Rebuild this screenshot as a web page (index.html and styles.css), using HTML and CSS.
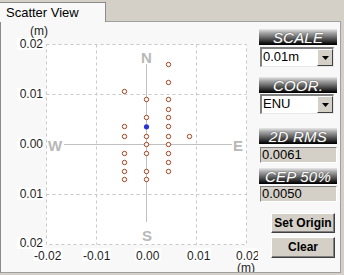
FILE: index.html
```html
<!DOCTYPE html>
<html>
<head>
<meta charset="utf-8">
<link rel="stylesheet" href="styles.css">
</head>
<body>
<div class="tabbar"><div class="tab">Scatter View</div></div>
<div class="panel">
  <svg class="plot" width="257" height="250" viewBox="1 22 257 250" xmlns="http://www.w3.org/2000/svg">
    <rect x="46.5" y="44.5" width="200" height="200" fill="#ffffff" stroke="#c8c8c8" stroke-dasharray="3 3"/>
    <g stroke="#c8c8c8" stroke-dasharray="3 3">
      <line x1="96.5" y1="44.5" x2="96.5" y2="244.5"/>
      <line x1="196.5" y1="44.5" x2="196.5" y2="244.5"/>
      <line x1="46.5" y1="94.5" x2="246.5" y2="94.5"/>
      <line x1="46.5" y1="194.5" x2="246.5" y2="194.5"/>
    </g>
    <g stroke="#c0c0c0">
      <line x1="146.5" y1="64" x2="146.5" y2="222"/>
      <line x1="64" y1="144.5" x2="232" y2="144.5"/>
    </g>
    <g class="dir">
      <text x="146.5" y="63" text-anchor="middle">N</text>
      <text x="147" y="241" text-anchor="middle">S</text>
      <text x="48" y="151">W</text>
      <text x="233" y="151">E</text>
    </g>
    <g fill="#ffffff">
      <rect x="17" y="38" width="27" height="12"/>
      <rect x="17" y="88" width="27" height="12"/>
      <rect x="17" y="138" width="27" height="12"/>
      <rect x="17" y="188" width="27" height="12"/>
      <rect x="17" y="237" width="27" height="12"/>
      <rect x="33" y="248" width="30" height="13"/>
      <rect x="82" y="248" width="29" height="13"/>
      <rect x="135" y="248" width="26" height="13"/>
      <rect x="186" y="248" width="25" height="13"/>
      <rect x="235" y="248" width="25" height="13"/>
    </g>
    <g class="lbl">
      <text x="30" y="35">(m)</text>
      <text x="43" y="48" text-anchor="end">0.02</text>
      <text x="43" y="98" text-anchor="end">0.01</text>
      <text x="43" y="148" text-anchor="end">0.00</text>
      <text x="43" y="198" text-anchor="end">0.01</text>
      <text x="43" y="247" text-anchor="end">0.02</text>
      <text x="34" y="260">-0.02</text>
      <text x="83" y="260">-0.01</text>
      <text x="136" y="260">0.00</text>
      <text x="187" y="260">0.01</text>
      <text x="236" y="260">0.02</text>
      <text x="237" y="272">(m)</text>
    </g>
    <g fill="#ffffff" stroke="#a3431f" stroke-width="1">
      <circle cx="168.5" cy="64.5" r="2.2"/>
      <circle cx="168.5" cy="82.5" r="2.2"/>
      <circle cx="168.5" cy="99.5" r="2.2"/>
      <circle cx="168.5" cy="109.5" r="2.2"/>
      <circle cx="168.5" cy="117.5" r="2.2"/>
      <circle cx="168.5" cy="126.5" r="2.2"/>
      <circle cx="168.5" cy="136.5" r="2.2"/>
      <circle cx="168.5" cy="144.5" r="2.2"/>
      <circle cx="168.5" cy="153.5" r="2.2"/>
      <circle cx="168.5" cy="162.5" r="2.2"/>
      <circle cx="168.5" cy="171.5" r="2.2"/>
      <circle cx="146.5" cy="99.5" r="2.2"/>
      <circle cx="146.5" cy="117.5" r="2.2"/>
      <circle cx="146.5" cy="136.5" r="2.2"/>
      <circle cx="146.5" cy="144.5" r="2.2"/>
      <circle cx="146.5" cy="153.5" r="2.2"/>
      <circle cx="146.5" cy="171.5" r="2.2"/>
      <circle cx="146.5" cy="179.5" r="2.2"/>
      <circle cx="124.5" cy="91.5" r="2.2"/>
      <circle cx="124.5" cy="126.5" r="2.2"/>
      <circle cx="124.5" cy="136.5" r="2.2"/>
      <circle cx="124.5" cy="153.5" r="2.2"/>
      <circle cx="124.5" cy="162.5" r="2.2"/>
      <circle cx="124.5" cy="171.5" r="2.2"/>
      <circle cx="124.5" cy="179.5" r="2.2"/>
      <circle cx="189.5" cy="136.5" r="2.2"/>
    </g>
    <circle cx="146.5" cy="126.8" r="2.6" fill="#2a35d6"/>
  </svg>
  <div class="side">
    <div class="hdr hdr-first">SCALE</div>
    <div class="combo"><span class="combo-val">0.01m</span><span class="combo-btn"><svg width="7" height="4" viewBox="0 0 7 4"><path d="M0 0h7L3.5 4z" fill="#000"/></svg></span></div>
    <div class="hdr hdr-coor">COOR.</div>
    <div class="combo combo-coor"><span class="combo-val">ENU</span><span class="combo-btn"><svg width="7" height="4" viewBox="0 0 7 4"><path d="M0 0h7L3.5 4z" fill="#000"/></svg></span></div>
    <div class="hdr hdr-rms">2D RMS</div>
    <div class="val">0.0061</div>
    <div class="hdr hdr-cep">CEP 50%</div>
    <div class="val val-cep">0.0050</div>
    <div class="btn btn-origin">Set Origin</div>
    <div class="btn btn-clear">Clear</div>
  </div>
</div>
</body>
</html>
```
FILE: styles.css
```css
html, body {
  margin: 0;
  padding: 0;
  background: #d4d0c8;
  font-family: "Liberation Sans", Arial, sans-serif;
  overflow: hidden;
}
.tabbar {
  height: 21px;
  display: flex;
  align-items: flex-end;
}
.tab {
  position: relative;
  z-index: 2;
  box-sizing: border-box;
  width: 106px;
  height: 20px;
  margin-bottom: -1px;
  background: #f8f8f8;
  border-top: 1px solid #8c8c8c;
  border-right: 1px solid #8c8c8c;
  font-size: 13px;
  line-height: 17px;
  padding-left: 6px;
  padding-top: 1px;
  color: #000;
}
.panel {
  box-sizing: border-box;
  width: 341px;
  height: 252px;
  background: #f8f8f8;
  border: 1px solid #a0a0a0;
  border-left-color: #8a8a8a;
  display: flex;
  overflow: hidden;
}
.plot {
  display: block;
  flex: none;
}
.dir text {
  font-family: "Liberation Sans", Arial, sans-serif;
  font-weight: bold;
  font-size: 15px;
  fill: #b8b8b8;
}
.lbl text {
  font-family: "Liberation Sans", Arial, sans-serif;
  font-size: 12px;
  fill: #1e1e1e;
}
.side {
  display: flex;
  flex-direction: column;
  align-items: flex-start;
  margin-left: 1px;
  padding-top: 7px;
  width: 78px;
}
.hdr {
  box-sizing: border-box;
  width: 78px;
  height: 16px;
  background: linear-gradient(#d6d6d6 0%, #a8a8a8 18%, #7c7c7c 40%, #3c3c3c 70%, #0a0a0a 92%, #000 100%);
  border-top: 1px solid #e0e0e0;
  color: #fff;
  font-style: italic;
  font-size: 15px;
  line-height: 15px;
  text-align: center;
  text-shadow: 0 0 1px #555, 0 0 1px #555;
  letter-spacing: 0.2px;
}
.hdr-coor { margin-top: 10px; }
.hdr-rms { margin-top: 14px; }
.hdr-cep { margin-top: 5px; }
.combo {
  box-sizing: border-box;
  margin-top: 2px;
  margin-left: 1px;
  width: 74px;
  height: 20px;
  background: #fff;
  border-top: 2px solid #808080;
  border-left: 2px solid #808080;
  border-right: 1px solid #e8e8e8;
  border-bottom: 1px solid #e8e8e8;
  display: flex;
  align-items: stretch;
}
.combo-coor { margin-top: 1px; }
.combo-val {
  flex: 1;
  font-size: 13px;
  line-height: 16px;
  padding-left: 1px;
  color: #000;
}
.combo-btn {
  box-sizing: border-box;
  width: 16px;
  background: #d4d0c8;
  border-top: 1px solid #fff;
  border-left: 1px solid #fff;
  border-right: 1px solid #404040;
  border-bottom: 1px solid #404040;
  display: flex;
  align-items: center;
  justify-content: center;
}
.val {
  box-sizing: border-box;
  margin-top: 3px;
  margin-left: 1px;
  width: 77px;
  height: 16px;
  background: #d4d0c8;
  border-top: 1px solid #808080;
  border-left: 1px solid #808080;
  border-right: 1px solid #fff;
  border-bottom: 1px solid #fff;
  font-size: 13px;
  line-height: 14px;
  padding-left: 1px;
  color: #000;
}
.val-cep { margin-top: 2px; }
.btn {
  box-sizing: border-box;
  margin-left: 12px;
  width: 64px;
  height: 20px;
  background: #d4d0c8;
  border-top: 1px solid #fff;
  border-left: 1px solid #fff;
  border-right: 1px solid #404040;
  border-bottom: 1px solid #404040;
  box-shadow: inset -1px -1px 0 #808080;
  font-size: 12px;
  font-weight: bold;
  line-height: 18px;
  text-align: center;
  color: #000;
}
.btn-origin { margin-top: 11px; }
.btn-clear { margin-top: 4px; height: 21px; }
```
